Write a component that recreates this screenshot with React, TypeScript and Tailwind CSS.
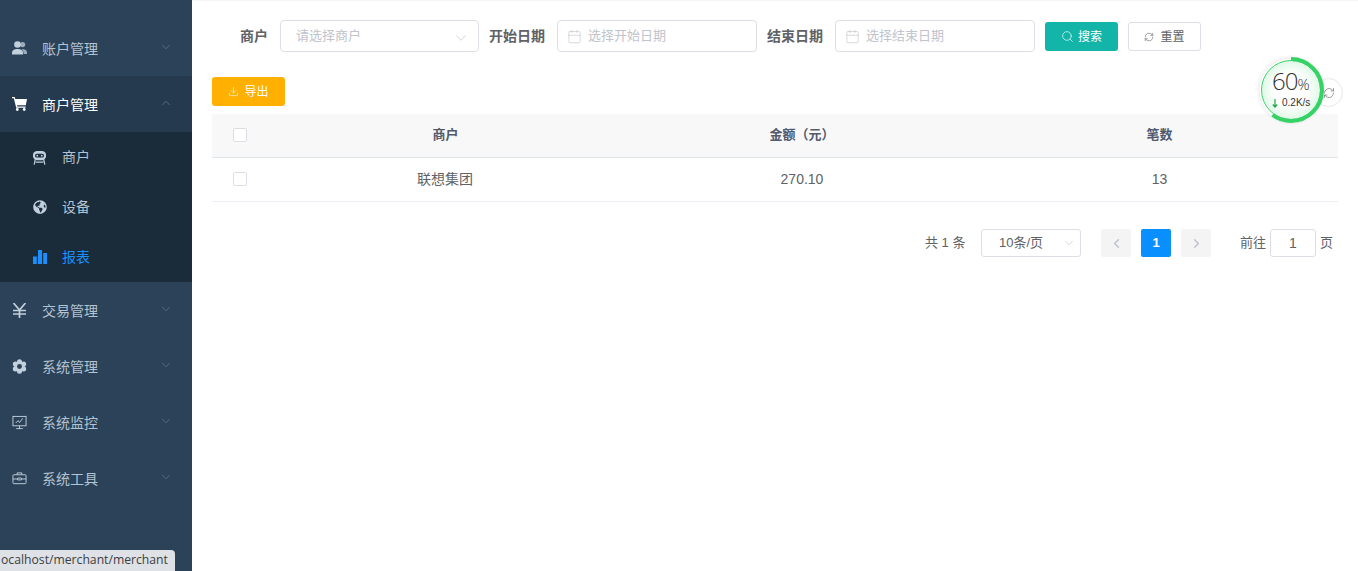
import type { ReactNode } from "react";
import { Calendar, ChevronDown, ChevronLeft, ChevronRight, ChevronUp, Download, RefreshCw, Search } from "lucide-react";
import { FaGlobeAmericas } from "react-icons/fa";

const font = "font-['Liberation_Sans','Noto_Sans_CJK_SC',sans-serif]";

function UsersIcon() {
  return (
    <svg viewBox="0 0 15 14" className="w-[15px] h-[14px]" fill="currentColor">
      <circle cx="10.6" cy="3.6" r="2.6" opacity="0.75" />
      <path d="M9.5 8c3 0 5.5 1 5.5 3.5V13h-3.4c0-2-.8-3.8-2.1-5Z" opacity="0.75" />
      <circle cx="5.5" cy="3.5" r="3.3" />
      <path d="M0 13.6V12c0-2.8 2.2-4 5.5-4s5.500 1.200 5.500 4v1.600H0Z" />
    </svg>
  );
}

function CartIcon() {
  return (
    <svg viewBox="0 0 15 14" className="w-[15px] h-[14px]" fill="currentColor">
      <path d="M0 0h2.6l.8 2H15l-1.200 6.200H5l.3 1.300h8.300v1.200H4.200L1.800 1.300H0V0Z" />
      <circle cx="5.3" cy="12.5" r="1.4" />
      <circle cx="12.2" cy="12.5" r="1.4" />
    </svg>
  );
}

function YenIcon() {
  return (
    <svg viewBox="0 0 15 15" className="w-[15px] h-[15px]" fill="none" stroke="currentColor" strokeWidth="1.7">
      <path d="m1.5 0 6 7 6-7M7.5 7v8M1 7.500h13M1 11h13" />
    </svg>
  );
}

function RobotIcon() {
  return (
    <svg viewBox="0 0 16 16" className="w-[15px] h-[15px]" fill="none" stroke="currentColor">
      <path d="M3.5 10 2.3 15.5M12.500 10l1.200 5.500M4 13h8" strokeWidth="1.3" />
      <rect x="1" y="1" width="14" height="10" rx="4.5" fill="currentColor" stroke="none" />
      <rect x="3.2" y="4" width="9.6" height="4" rx="2" fill="#1a2b3a" stroke="none" />
      <circle cx="5.600" cy="6" r="1" fill="currentColor" stroke="none" />
      <circle cx="10.400" cy="6" r="1" fill="currentColor" stroke="none" />
    </svg>
  );
}

function BarsIcon() {
  return (
    <svg viewBox="0 0 14 14" className="w-[14px] h-[14px]" fill="currentColor">
      <rect x="0" y="6.5" width="3.8" height="7.5" />
      <rect x="5" y="0" width="4" height="14" />
      <rect x="10.2" y="3" width="3.8" height="11" />
    </svg>
  );
}

function GearIcon() {
  return (
    <svg viewBox="0 0 16 16" className="w-[15px] h-[15px]" fill="currentColor">
      <circle cx="8" cy="8" r="5.5" />
      <circle cx="8" cy="2.900" r="2.700" />
      <circle cx="8" cy="13.100" r="2.700" />
      <circle cx="3.600" cy="5.450" r="2.700" />
      <circle cx="12.400" cy="5.450" r="2.700" />
      <circle cx="3.600" cy="10.550" r="2.700" />
      <circle cx="12.400" cy="10.550" r="2.700" />
      <circle cx="8" cy="8" r="2.600" fill="#2b4258" />
    </svg>
  );
}

function MonitorIcon() {
  return (
    <svg viewBox="0 0 16 16" className="w-[15px] h-[15px]" fill="none" stroke="currentColor" strokeWidth="1">
      <rect x="1" y="1.5" width="14" height="10" />
      <path d="m4 8.500 2.500-2.500L8 8l3.500-4.500M8 11.500V14M4.500 14.500h7" />
    </svg>
  );
}

function ToolboxIcon() {
  return (
    <svg viewBox="0 0 16 16" className="w-[15px] h-[15px]" fill="none" stroke="currentColor" strokeWidth="1">
      <rect x="1" y="4" width="14" height="9.5" rx="1" />
      <path d="M5.500 4V2h5v2M1 8.500h5M10 8.500h5M6 7.500h4v2H6z" />
    </svg>
  );
}

function MenuItem({ icon, label, open, active }: { icon: ReactNode; label: string; open?: boolean; active?: boolean }) {
  return (
    <div className={`h-14 flex items-center pl-[11px] pr-[19px] ${active ? "bg-[#253a4f] text-white" : "text-[#b4c3d2]"}`}>
      <span className="w-[16px] flex justify-center text-[#c2cfdc]">{icon}</span>
      <span className="ml-[15px] text-sm flex-1 mt-[1px]">{label}</span>
      {open ? <ChevronUp className="w-[14px] h-[14px] mb-[2px] text-[#5f7488]" strokeWidth={1.4} /> : <ChevronDown className="w-[14px] h-[14px] mb-[2px] text-[#5f7488]" strokeWidth={1.4} />}
    </div>
  );
}

function SubItem({ icon, label, active }: { icon: ReactNode; label: string; active?: boolean }) {
  return (
    <div className={`h-[50px] flex items-center pl-[32px] ${active ? "text-[#1890ff]" : "text-[#b4c3d2]"}`}>
      <span className={`w-[15px] flex justify-center ${active ? "" : "text-[#c2cfdc]"}`}>{icon}</span>
      <span className="ml-[15px] text-sm">{label}</span>
    </div>
  );
}

function DateInput({ placeholder }: { placeholder: string }) {
  return (
    <div className="w-[200px] h-8 border border-[#dcdfe6] rounded flex items-center pl-[9px] text-[13px] text-[#c0c4cc]">
      <Calendar className="w-[15px] h-[15px] mr-[6px]" strokeWidth={1} />
      {placeholder}
    </div>
  );
}

function Checkbox() {
  return <span className="block w-[14px] h-[14px] border border-[#dcdfe6] rounded-[2px] bg-white" />;
}

export default function App() {
  return (
    <div className={`relative h-[571px] w-[1358px] overflow-hidden flex bg-white ${font}`}>
      <aside className="w-[192px] shrink-0 pt-[20px] bg-[#2b4258]">
        <MenuItem icon={<UsersIcon />} label="账户管理" />
        <MenuItem icon={<span className="text-white"><CartIcon /></span>} label="商户管理" open active />
        <div className="bg-[#1a2b3a]">
          <SubItem icon={<RobotIcon />} label="商户" />
          <SubItem icon={<FaGlobeAmericas className="w-[14px] h-[14px]" />} label="设备" />
          <SubItem icon={<BarsIcon />} label="报表" active />
        </div>
        <MenuItem icon={<YenIcon />} label="交易管理" />
        <MenuItem icon={<GearIcon />} label="系统管理" />
        <MenuItem icon={<MonitorIcon />} label="系统监控" />
        <MenuItem icon={<ToolboxIcon />} label="系统工具" />
      </aside>

      <main className="flex-1 pl-[20px] pr-[20px] border-t border-[#f5f5f5]">
        <div className="flex items-center h-8 mt-[19px] pl-[28px] text-sm">
          <span className="font-bold text-[#606266] w-[28px]">商户</span>
          <div className="ml-[12px] w-[199px] h-8 border border-[#dcdfe6] rounded flex items-center justify-between pl-[15px] pr-[8px] text-[13px] text-[#c0c4cc]">
            请选择商户
            <ChevronDown className="w-[18px] h-[18px] mt-[4px]" strokeWidth={1} />
          </div>
          <span className="ml-[10px] font-bold text-[#606266] w-[56px]">开始日期</span>
          <div className="ml-[12px]">
            <DateInput placeholder="选择开始日期" />
          </div>
          <span className="ml-[10px] font-bold text-[#606266] w-[56px]">结束日期</span>
          <div className="ml-[12px]">
            <DateInput placeholder="选择结束日期" />
          </div>
          <button className="ml-[10px] w-[73px] h-[29px] rounded-[3px] bg-[#13b5a9] text-white text-xs flex items-center justify-center gap-[4px] pt-[1px]">
            <Search className="w-[13px] h-[13px]" strokeWidth={1.2} />
            搜索
          </button>
          <button className="ml-[10px] w-[73px] h-[29px] rounded-[3px] border border-[#dcdfe6] text-[#606266] text-xs flex items-center justify-center gap-[6px] pt-[1px]">
            <RefreshCw className="w-[10px] h-[10px]" strokeWidth={1.4} />
            重置
          </button>
        </div>

        <button className="mt-[25px] block w-[73px] h-[29px] rounded-[3px] bg-[#ffb000] text-white text-xs">
          <span className="flex items-center justify-center gap-[5px]">
            <Download className="w-[11px] h-[11px]" strokeWidth={1.4} />
            导出
          </span>
        </button>

        <div className="mt-[8px] text-[13px] text-[#606266]">
          <div className="grid grid-cols-[56px_354px_354px_1fr] h-[44px] pb-[2px] items-center bg-[#f8f8f9] border-b border-[#dfe6ec] font-bold text-[#515a6e]">
            <span className="pl-[21px]">
              <Checkbox />
            </span>
            <span className="text-center pl-[1px]">商户</span>
            <span className="text-center pl-[6px]">金额（元）</span>
            <span className="text-center pl-[5px]">笔数</span>
          </div>
          <div className="grid grid-cols-[56px_354px_354px_1fr] h-[44px] pb-[2px] items-center border-b border-[#ebeef5] text-sm">
            <span className="pl-[21px]">
              <Checkbox />
            </span>
            <span className="text-center">联想集团</span>
            <span className="text-center pl-[6px]">270.10</span>
            <span className="text-center pl-[5px]">13</span>
          </div>
        </div>

        <div className="mt-[27px] h-7 flex items-center text-[13px] text-[#606266]">
          <span className="ml-[713px] w-[42px]">共 1 条</span>
          <div className="ml-[14px] w-[100px] h-7 border border-[#dcdfe6] rounded-[3px] flex items-center justify-between pl-[17px] pr-[4px]">
            10条/页
            <ChevronDown className="w-[14px] h-[14px] text-[#c0c4cc]" strokeWidth={1.1} />
          </div>
          <span className="ml-[20px] w-[30px] h-7 rounded-[2px] bg-[#f4f4f5] flex items-center justify-center text-[#c0c4cc]">
            <ChevronLeft className="w-[15px] h-[15px]" strokeWidth={2.6} />
          </span>
          <span className="ml-[10px] w-[30px] h-7 rounded-[2px] bg-[#0a8fff] flex items-center justify-center text-white font-bold">1</span>
          <span className="ml-[10px] w-[30px] h-7 rounded-[2px] bg-[#f4f4f5] flex items-center justify-center text-[#c0c4cc]">
            <ChevronRight className="w-[15px] h-[15px]" strokeWidth={2.6} />
          </span>
          <span className="ml-[29px]">前往</span>
          <span className="ml-[4px] w-[46px] h-7 border border-[#dcdfe6] rounded-[3px] flex items-center justify-center text-sm">1</span>
          <span className="ml-[4px]">页</span>
        </div>
      </main>

      {/* speed ball floating over the table */}
      <div className="absolute left-[1314px] top-[78px] w-[29px] h-[29px] rounded-full bg-white border border-[#e8e8e8] flex items-center justify-center text-[#606266]">
        <RefreshCw className="w-[12px] h-[12px]" strokeWidth={1.2} />
      </div>
      <div className="absolute left-[1258px] top-[57px] w-[66px] h-[66px] rounded-full bg-white shadow-[0_0_3px_rgba(0,0,0,0.12)]">
        <svg viewBox="0 0 66 66" className="absolute inset-0">
          <defs>
            <radialGradient id="ball">
              <stop offset="55%" stopColor="#ffffff" />
              <stop offset="100%" stopColor="#dff8e6" />
            </radialGradient>
          </defs>
          <circle cx="33" cy="33" r="32" fill="#ffffff" stroke="#eeeeee" strokeWidth="1" />
          <circle cx="33" cy="33" r="29.5" fill="url(#ball)" stroke="#3cd46c" strokeWidth="1" />
          <circle cx="33" cy="33" r="31" fill="none" stroke="#35d266" strokeWidth="4" strokeDasharray="117 78" transform="rotate(-90 33 33)" />
        </svg>
        <div className="absolute left-[14px] top-[12px] flex items-baseline text-[#333] font-['Open_Sans',sans-serif] font-light leading-none">
          <span className="text-[24px] tracking-[-1px]">60</span>
          <span className="text-[15px]">%</span>
        </div>
        <div className="absolute left-[14px] top-[41px] flex items-center gap-[4px] text-[10px] leading-none text-[#333]">
          <svg viewBox="0 0 6 9" className="w-[6px] h-[9px]" fill="none" stroke="#1fa84a" strokeWidth="1.2">
            <path d="M3 0v8M.8 5.500 3 8l2.200-2.500" />
          </svg>
          0.2K/s
        </div>
      </div>

      {/* browser status bubble */}
      <div className="absolute left-0 bottom-0 w-[175px] h-[21px] bg-[#dee1e6] rounded-tr-[4px] flex items-center text-[12.2px] text-[#3c4043] font-['Open_Sans',sans-serif] whitespace-nowrap">
        <span className="ml-[1px]">ocalhost/merchant/merchant</span>
      </div>
    </div>
  );
}
